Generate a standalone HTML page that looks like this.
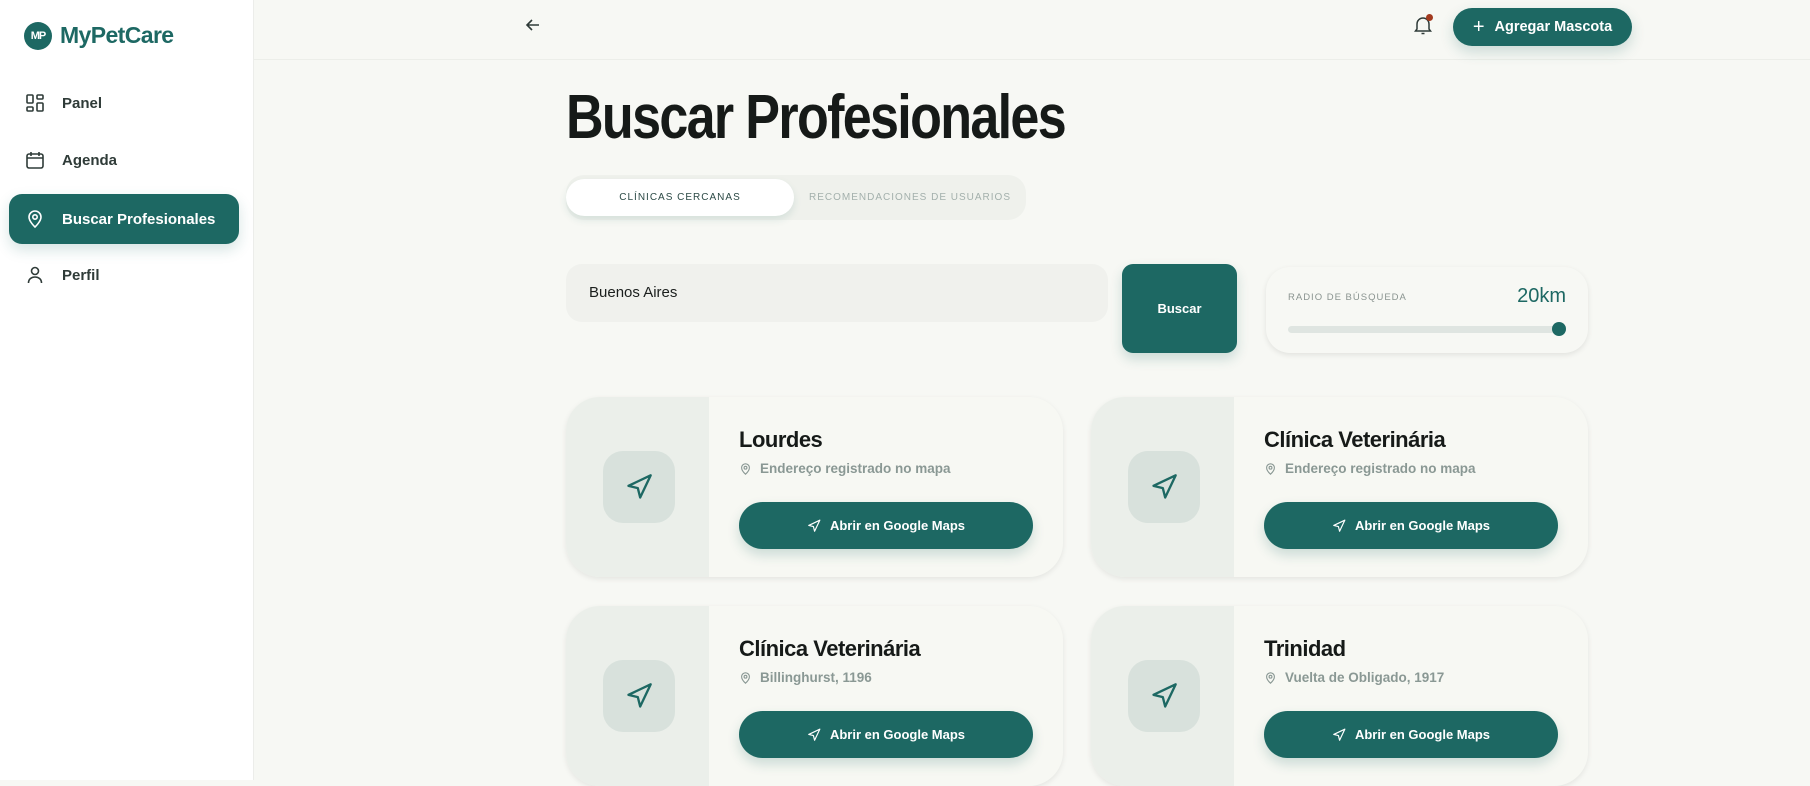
<!DOCTYPE html>
<html><head><meta charset="utf-8"><style>
*{box-sizing:border-box;margin:0;padding:0}
body{width:1810px;height:780px;overflow:hidden;background:#f7f8f4;font-family:"Liberation Sans",sans-serif;position:relative;color:#1b1f1d}
.abs{position:absolute}
.side{left:0;top:0;width:254px;height:780px;background:#fff;border-right:1px solid #ecedea}
.nav{position:absolute;left:9px;width:230px;height:50px;display:flex;align-items:center;padding-left:16px;font-weight:bold;font-size:15px;color:#2f3b38}
.nav svg{margin-right:17px}
.nav.act{background:#1d6863;color:#fff;border-radius:13px;box-shadow:0 6px 14px rgba(29,104,99,.18)}
.header{left:254px;top:0;width:1556px;height:60px;border-bottom:1px solid #eceee9}
.teal{background:#1d6863;color:#fff}
.card{position:absolute;width:497px;height:180px;border-radius:34px;background:#f7f8f3;box-shadow:0 2px 6px rgba(0,0,0,.08);overflow:hidden}
.card .lp{position:absolute;left:0;top:0;width:143px;height:100%;background:#ebefea}
.card .ic{position:absolute;left:37px;top:54px;width:72px;height:72px;border-radius:20px;background:#d8e1dc;display:flex;align-items:center;justify-content:center}
.card h3{position:absolute;left:173px;top:30px;font-size:22px;font-weight:bold;letter-spacing:-.5px;color:#161a18}
.card .ad{position:absolute;left:173px;top:64px;font-size:13.5px;color:#8a9894;font-weight:bold;display:flex;align-items:center}
.card .ad svg{margin-right:8px}
.card .bt{position:absolute;left:173px;top:105px;width:294px;height:47px;border-radius:24px;background:#1d6863;color:#fff;font-weight:bold;font-size:13px;display:flex;align-items:center;justify-content:center;box-shadow:0 6px 12px rgba(29,104,99,.2)}
.card .bt svg{margin-right:9px}
</style></head><body>
<div class="abs side">
  <div class="abs" style="left:24px;top:22px;width:28px;height:28px;border-radius:50%;background:#1d6863;color:#fff;font-size:11px;font-weight:bold;display:flex;align-items:center;justify-content:center;letter-spacing:-1px">MP</div>
  <div class="abs" style="left:60px;top:22px;font-size:23px;font-weight:bold;color:#1d6863;letter-spacing:-.6px">MyPetCare</div>
  <div class="nav" style="top:78px"><svg width="20" height="20" viewBox="0 0 20 20" fill="none" stroke="#2f3b38" stroke-width="1.6"><rect x="2" y="2" width="6" height="8" rx="1"/><rect x="12" y="2" width="6" height="4" rx="1"/><rect x="12" y="10" width="6" height="8" rx="1"/><rect x="2" y="14" width="6" height="4" rx="1"/></svg>Panel</div>
  <div class="nav" style="top:135px"><svg width="20" height="20" viewBox="0 0 20 20" fill="none" stroke="#2f3b38" stroke-width="1.6"><rect x="2" y="4" width="16" height="14" rx="2"/><path d="M2 8h16M6 2v4M14 2v4"/></svg>Agenda</div>
  <div class="nav act" style="top:194px"><svg width="20" height="20" viewBox="0 0 20 20" fill="none" stroke="#fff" stroke-width="1.6"><path d="M10 18s6-5.5 6-10a6 6 0 0 0-12 0c0 4.5 6 10 6 10z"/><circle cx="10" cy="8" r="2.2"/></svg>Buscar Profesionales</div>
  <div class="nav" style="top:250px"><svg width="20" height="20" viewBox="0 0 20 20" fill="none" stroke="#2f3b38" stroke-width="1.6"><circle cx="10" cy="6" r="3.5"/><path d="M3.5 18c0-4 3-6 6.5-6s6.5 2 6.5 6"/></svg>Perfil</div>
</div>
<div class="abs header">
  <svg class="abs" style="left:270px;top:16px" width="18" height="18" viewBox="0 0 18 18" fill="none" stroke="#2f3b38" stroke-width="1.6"><path d="M15 9H3M8 4L3 9l5 5"/></svg>
  <svg class="abs" style="left:1158px;top:14px" width="22" height="22" viewBox="0 0 22 22" fill="none" stroke="#2f3b38" stroke-width="1.5"><path d="M5 15V10a6 6 0 0 1 12 0v5l1.5 2h-15z"/><path d="M9.5 19.5h3"/></svg>
  <div class="abs" style="left:1172px;top:14px;width:7px;height:7px;border-radius:50%;background:#a23a1f"></div>
  <div class="abs teal" style="left:1199px;top:8px;width:179px;height:38px;border-radius:19px;font-weight:bold;font-size:14.5px;display:flex;align-items:center;justify-content:center;box-shadow:0 6px 14px rgba(29,104,99,.2)"><span style="font-size:20px;font-weight:normal;margin-right:10px">+</span>Agregar Mascota</div>
</div>
<div class="abs" style="left:566px;top:82px;font-size:62px;font-weight:bold;letter-spacing:-2px;transform:scaleX(.84);transform-origin:left;color:#161a18;white-space:nowrap">Buscar Profesionales</div>
<div class="abs" style="left:566px;top:175px;width:460px;height:45px;border-radius:18px;background:#eff1ec"></div>
<div class="abs" style="left:566px;top:179px;width:228px;height:37px;border-radius:19px;background:#fff;box-shadow:0 4px 8px rgba(29,104,99,.12);font-size:10px;letter-spacing:1px;color:#2c4a46;display:flex;align-items:center;justify-content:center">CLÍNICAS CERCANAS</div>
<div class="abs" style="left:794px;top:179px;width:232px;height:37px;font-size:10px;letter-spacing:1px;color:#a3b0ac;display:flex;align-items:center;justify-content:center">RECOMENDACIONES DE USUARIOS</div>
<div class="abs" style="left:566px;top:264px;width:542px;height:58px;border-radius:16px;background:#f0f1ed;padding:20px 0 0 23px;font-size:15px;color:#1b1f1d">Buenos Aires</div>
<div class="abs teal" style="left:1122px;top:264px;width:115px;height:89px;border-radius:11px;font-weight:bold;font-size:13px;display:flex;align-items:center;justify-content:center;box-shadow:0 6px 12px rgba(29,104,99,.2)">Buscar</div>
<div class="abs" style="left:1266px;top:267px;width:322px;height:86px;border-radius:24px;background:#f7f8f4;box-shadow:0 2px 6px rgba(0,0,0,.09)">
  <div class="abs" style="left:22px;top:25px;font-size:9.5px;letter-spacing:1px;color:#8a9490">RADIO DE BÚSQUEDA</div>
  <div class="abs" style="right:22px;top:18px;font-size:20px;color:#1d6863">20km</div>
  <div class="abs" style="left:22px;top:59px;width:278px;height:7px;border-radius:4px;background:#dfe5e1"></div>
  <div class="abs" style="left:286px;top:55px;width:14px;height:14px;border-radius:50%;background:#1d6863"></div>
</div>
<div class="card" style="left:566px;top:397px"><div class="lp"></div><div class="ic"><svg width="28" height="28" viewBox="0 0 24 24" fill="none" stroke="#1d6863" stroke-width="2" stroke-linejoin="round"><path d="M3 11l19-9-9 19-2-8z"/></svg></div><h3>Lourdes</h3><div class="ad"><svg width="13" height="14" viewBox="0 0 20 20" fill="none" stroke="#8a9894" stroke-width="1.7"><path d="M10 18s6-5.5 6-10a6 6 0 0 0-12 0c0 4.5 6 10 6 10z"/><circle cx="10" cy="8" r="2.2"/></svg>Endereço registrado no mapa</div><div class="bt"><svg width="14" height="14" viewBox="0 0 24 24" fill="none" stroke="#fff" stroke-width="2" stroke-linejoin="round"><path d="M3 11l19-9-9 19-2-8z"/></svg>Abrir en Google Maps</div></div>
<div class="card" style="left:1091px;top:397px"><div class="lp"></div><div class="ic"><svg width="28" height="28" viewBox="0 0 24 24" fill="none" stroke="#1d6863" stroke-width="2" stroke-linejoin="round"><path d="M3 11l19-9-9 19-2-8z"/></svg></div><h3>Clínica Veterinária</h3><div class="ad"><svg width="13" height="14" viewBox="0 0 20 20" fill="none" stroke="#8a9894" stroke-width="1.7"><path d="M10 18s6-5.5 6-10a6 6 0 0 0-12 0c0 4.5 6 10 6 10z"/><circle cx="10" cy="8" r="2.2"/></svg>Endereço registrado no mapa</div><div class="bt"><svg width="14" height="14" viewBox="0 0 24 24" fill="none" stroke="#fff" stroke-width="2" stroke-linejoin="round"><path d="M3 11l19-9-9 19-2-8z"/></svg>Abrir en Google Maps</div></div>
<div class="card" style="left:566px;top:606px"><div class="lp"></div><div class="ic"><svg width="28" height="28" viewBox="0 0 24 24" fill="none" stroke="#1d6863" stroke-width="2" stroke-linejoin="round"><path d="M3 11l19-9-9 19-2-8z"/></svg></div><h3>Clínica Veterinária</h3><div class="ad"><svg width="13" height="14" viewBox="0 0 20 20" fill="none" stroke="#8a9894" stroke-width="1.7"><path d="M10 18s6-5.5 6-10a6 6 0 0 0-12 0c0 4.5 6 10 6 10z"/><circle cx="10" cy="8" r="2.2"/></svg>Billinghurst, 1196</div><div class="bt"><svg width="14" height="14" viewBox="0 0 24 24" fill="none" stroke="#fff" stroke-width="2" stroke-linejoin="round"><path d="M3 11l19-9-9 19-2-8z"/></svg>Abrir en Google Maps</div></div>
<div class="card" style="left:1091px;top:606px"><div class="lp"></div><div class="ic"><svg width="28" height="28" viewBox="0 0 24 24" fill="none" stroke="#1d6863" stroke-width="2" stroke-linejoin="round"><path d="M3 11l19-9-9 19-2-8z"/></svg></div><h3>Trinidad</h3><div class="ad"><svg width="13" height="14" viewBox="0 0 20 20" fill="none" stroke="#8a9894" stroke-width="1.7"><path d="M10 18s6-5.5 6-10a6 6 0 0 0-12 0c0 4.5 6 10 6 10z"/><circle cx="10" cy="8" r="2.2"/></svg>Vuelta de Obligado, 1917</div><div class="bt"><svg width="14" height="14" viewBox="0 0 24 24" fill="none" stroke="#fff" stroke-width="2" stroke-linejoin="round"><path d="M3 11l19-9-9 19-2-8z"/></svg>Abrir en Google Maps</div></div>
</body></html>
